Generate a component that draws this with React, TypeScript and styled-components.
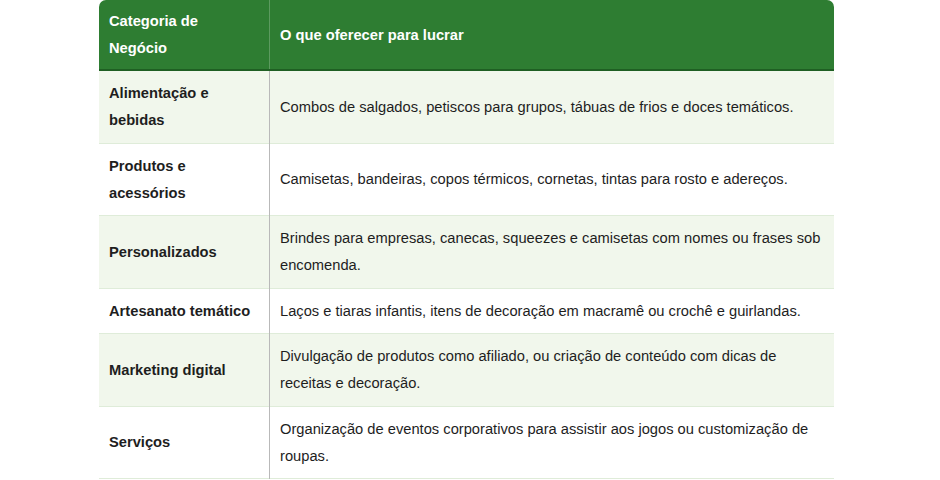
import styled, { createGlobalStyle } from "styled-components";

const GlobalStyle = createGlobalStyle`
	html, body {
		margin: 0;
		padding: 0;
		background: #ffffff;
	}
	body {
		font-family: "Liberation Sans", Arial, sans-serif;
		color: #1e1e1e;
	}
`;

const Page = styled.div`
	width: 940px;
	height: 480px;
	overflow: hidden;
	padding-left: 99px;
	box-sizing: border-box;
`;

const TableWrap = styled.div`
	width: 735px;
	border-radius: 7px 7px 0 0;
	overflow: hidden;
`;

const Table = styled.table`
	width: 100%;
	border-collapse: collapse;
	font-size: 14.7px;
	line-height: 27px;
	table-layout: fixed;
`;

const HeadRow = styled.tr`
	background: #2e7d32;
	border-bottom: 2px solid #1f5f23;
`;

const HeadCell = styled.th<{ $first?: boolean }>`
	text-align: left;
	vertical-align: middle;
	color: #ffffff;
	font-weight: bold;
	padding: 8px 10px 7px;
	width: ${({ $first }) => ($first ? "150px" : "auto")};
	border-right: ${({ $first }) => ($first ? "1px solid #5c9a5f" : "none")};
`;

const Row = styled.tr<{ $shaded: boolean }>`
	background: ${({ $shaded }) => ($shaded ? "#f1f7ec" : "#ffffff")};
	border-bottom: 1px solid #dfecd9;
`;

const Cell = styled.td<{ $first?: boolean }>`
	padding: 9px 10px 8.5px;
	vertical-align: middle;
	font-weight: ${({ $first }) => ($first ? "bold" : "normal")};
	border-right: ${({ $first }) => ($first ? "1px solid #b9b9b9" : "none")};
`;

const rows = [
	{
		cat: "Alimentação e bebidas",
		offer: "Combos de salgados, petiscos para grupos, tábuas de frios e doces temáticos.",
	},
	{
		cat: "Produtos e acessórios",
		offer: "Camisetas, bandeiras, copos térmicos, cornetas, tintas para rosto e adereços.",
	},
	{
		cat: "Personalizados",
		offer: "Brindes para empresas, canecas, squeezes e camisetas com nomes ou frases sob encomenda.",
	},
	{
		cat: "Artesanato temático",
		offer: "Laços e tiaras infantis, itens de decoração em macramê ou crochê e guirlandas.",
	},
	{
		cat: "Marketing digital",
		offer: "Divulgação de produtos como afiliado, ou criação de conteúdo com dicas de receitas e decoração.",
	},
	{
		cat: "Serviços",
		offer: "Organização de eventos corporativos para assistir aos jogos ou customização de roupas.",
	},
];

export default function App() {
	return (
		<>
			<GlobalStyle />
			<Page>
				<TableWrap>
					<Table>
						<thead>
							<HeadRow>
								<HeadCell $first>Categoria de Negócio</HeadCell>
								<HeadCell>O que oferecer para lucrar</HeadCell>
							</HeadRow>
						</thead>
						<tbody>
							{rows.map((r, i) => (
								<Row key={r.cat} $shaded={i % 2 === 0}>
									<Cell $first>{r.cat}</Cell>
									<Cell>{r.offer}</Cell>
								</Row>
							))}
						</tbody>
					</Table>
				</TableWrap>
			</Page>
		</>
	);
}
